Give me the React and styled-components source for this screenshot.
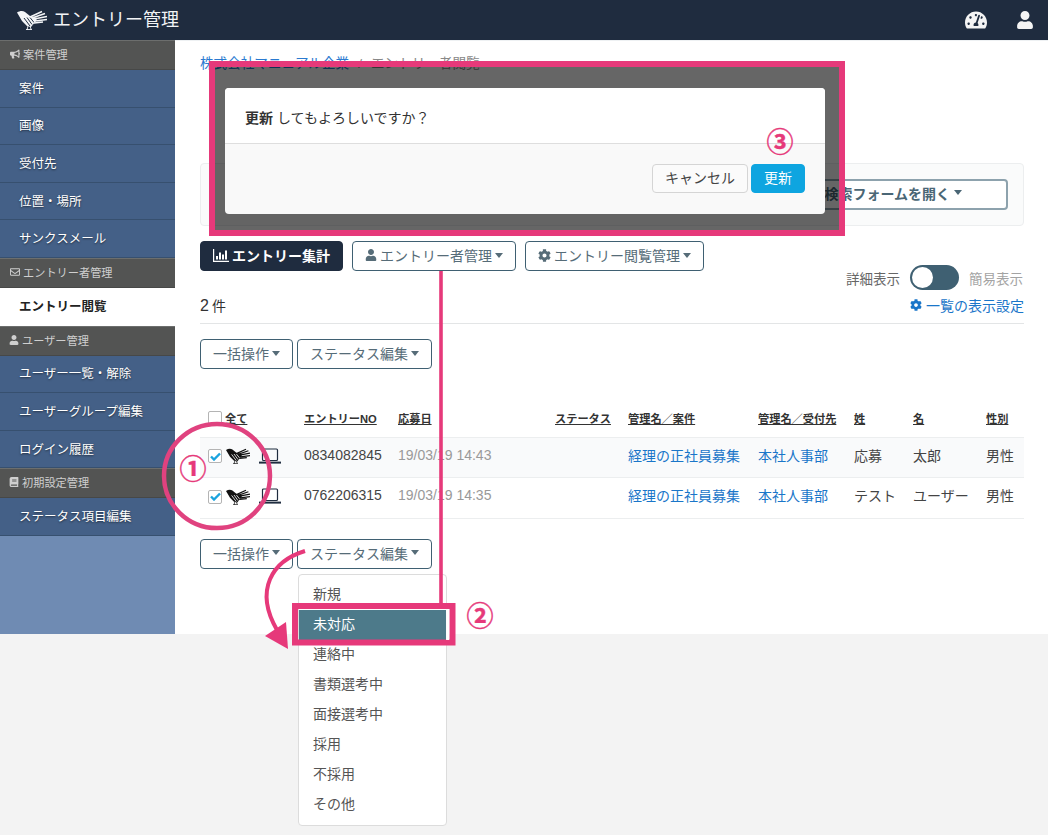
import React from "react";
import styled, { createGlobalStyle } from "styled-components";
import { FaBullhorn, FaRegEnvelope, FaUser, FaBook, FaCog, FaTachometerAlt } from "react-icons/fa";

const PINK = "#e6397a";
const TEAL = "#3f6072";
const NAVY = "#1f2c3f";

const Global = createGlobalStyle`
  html, body { margin: 0; padding: 0; background: #f3f3f3; }
  body { font-family: "Liberation Sans", "Noto Sans CJK JP", sans-serif; font-size: 14px; color: #333; }
  * { box-sizing: border-box; }
`;

const Page = styled.div`
  position: relative;
  width: 1048px;
  height: 835px;
  overflow: hidden;
`;

const TopBar = styled.header`
  height: 40px;
  background: ${NAVY};
  display: flex;
  align-items: center;
  padding: 0 14px 0 17px;
  color: #fff;
`;
const Brand = styled.div`
  display: flex;
  align-items: center;
  gap: 6px;
  font-size: 18px;
  color: #f2f4f6;
  flex: 1;
`;
const BrandName = styled.span`
  padding-bottom: 4px;
`;
const TopIcons = styled.div`
  display: flex;
  align-items: center;
  gap: 29px;
  font-size: 20px;
  color: #f4f4f4;
  svg { display: block; }
`;

const Body = styled.div`
  display: flex;
  height: 594px;
`;
const Sidebar = styled.nav`
  width: 175px;
  flex: none;
  background: #6f8bb3;
`;
const SideSection = styled.div`
  height: 30px;
  background: #535453;
  border-top: 1px solid #6c6e6d;
  border-bottom: 1px solid #474847;
  color: #cfcfcf;
  font-size: 11.2px;
  display: flex;
  align-items: center;
  gap: 3px;
  padding: 0 0 2px ${(p) => p.$pad || 10}px;
  svg { font-size: 10px; flex: none; }
`;
const SideItem = styled.div`
  height: 37.6px;
  display: flex;
  align-items: center;
  padding: 0 0 2px 19px;
  font-size: 12.5px;
  background: ${(p) => (p.$active ? "#fff" : "#446087")};
  color: ${(p) => (p.$active ? "#222" : "#fff")};
  font-weight: ${(p) => (p.$active ? 700 : 400)};
  text-shadow: ${(p) => (p.$active ? "none" : "0 1px 2px rgba(0,0,0,.55)")};
  border-bottom: 1px solid ${(p) => (p.$active ? "#fff" : "#37506f")};
`;

const Main = styled.main`
  flex: 1;
  background: #fff;
  padding: 14px 24px 0 25px;
  border-top: 1px solid #eef1f3;
`;
const Breadcrumb = styled.div`
  font-size: 13.6px;
  line-height: 18px;
  color: #888;
  a { color: #2a7ad0; }
`;
const CrumbSep = styled.span`
  margin: 0 9px;
`;
const SearchPanel = styled.section`
  margin-top: 90px;
  height: 63px;
  border: 1px solid #eceeef;
  border-radius: 4px;
  background: #fafbfb;
  display: flex;
  justify-content: flex-end;
  align-items: center;
  padding: 0 15px;
`;
const SearchButton = styled.div`
  height: 31px;
  border: 2px solid #8da2ad;
  border-radius: 4px;
  padding: 0 44px 4px;
  display: flex;
  align-items: center;
  gap: 4px;
  color: #4a6675;
  font-weight: 700;
  font-size: 14px;
  background: #fff;
`;
const Caret = styled.i`
  display: inline-block;
  width: 0;
  height: 0;
  border-left: 4px solid transparent;
  border-right: 4px solid transparent;
  border-top: 5px solid currentColor;
`;
const ButtonRow = styled.div`
  display: flex;
  gap: ${(p) => p.$gap || 4}px;
  margin-top: ${(p) => p.$top || 0}px;
`;
const Button = styled.div`
  position: relative;
  height: 30px;
  padding: 0 ${(p) => p.$pad || 12}px 2px;
  border: 1px solid ${(p) => (p.$solid ? NAVY : TEAL)};
  border-radius: 4px;
  background: ${(p) => (p.$solid ? NAVY : "#fff")};
  color: ${(p) => (p.$solid ? "#fff" : "#566c78")};
  font-weight: ${(p) => (p.$solid ? 700 : 400)};
  font-size: 14px;
  display: flex;
  align-items: center;
  gap: 3px;
  white-space: nowrap;
  svg { flex: none; }
`;
const ResultHead = styled.div`
  display: flex;
  justify-content: space-between;
  align-items: flex-end;
  margin-top: -7px;
  height: 60px;
  padding-bottom: 8px;
  border-bottom: 1px solid #e3e5e6;
`;
const Count = styled.div`
  font-size: 14px;
  color: #333;
  b { font-size: 16px; font-weight: 400; margin-right: 3px; }
`;
const ViewTools = styled.div`
  display: flex;
  flex-direction: column;
  align-items: flex-end;
  gap: 5px;
`;
const ToggleRow = styled.div`
  display: flex;
  align-items: center;
  gap: 10px;
  font-size: 13.5px;
  padding-right: 1px;
`;
const ToggleLabel = styled.span`
  color: ${(p) => (p.$on ? "#666" : "#a3a3a3")};
`;
const Toggle = styled.span`
  display: block;
  width: 49px;
  height: 25px;
  border-radius: 13px;
  background: ${TEAL};
  position: relative;
  &::before {
    content: "";
    position: absolute;
    left: 2px;
    top: 2px;
    width: 21px;
    height: 21px;
    border-radius: 50%;
    background: #fff;
  }
`;
const SettingLink = styled.div`
  display: flex;
  align-items: center;
  gap: 4px;
  font-size: 14px;
  color: #1a76c9;
  svg { font-size: 12px; }
`;
const Table = styled.table`
  width: 824px;
  table-layout: fixed;
  border-collapse: collapse;
  margin-top: 30px;
`;
const Th = styled.th`
  height: 38px;
  padding: 0 0 0 8px;
  font-size: 11.2px;
  font-weight: 700;
  text-align: left;
  color: #333;
  text-decoration: underline;
  white-space: nowrap;
`;
const HeadCheck = styled.div`
  display: flex;
  align-items: center;
  gap: 3px;
`;
const Row = styled.tr`
  background: ${(p) => (p.$odd ? "#f9fafb" : "#fff")};
  border-top: 1px solid #eceeef;
  border-bottom: 1px solid #eceeef;
`;
const Td = styled.td`
  height: 40.5px;
  padding: 0 0 ${(p) => (p.$icons ? 2 : 5)}px 8px;
  font-size: 14px;
  white-space: nowrap;
  color: ${(p) => (p.$muted ? "#999" : p.$link ? "#1a76c9" : "#444")};
`;
const RowIcons = styled.div`
  display: flex;
  align-items: center;
  gap: 4px;
`;
const LaptopSlot = styled.span`
  margin-left: 5px;
`;
const CheckBox = styled.span`
  display: inline-flex;
  align-items: center;
  justify-content: center;
  width: 14px;
  height: 14px;
  flex: none;
  background: #fff;
  border: 1px solid #b4b4b4;
  border-radius: 2px;
  color: #1aa3de;
`;
const Menu = styled.div`
  position: absolute;
  left: 0;
  top: 34px;
  width: 149px;
  padding: 5px 0;
  background: #fff;
  border: 1px solid #dcdcdc;
  border-radius: 4px;
  z-index: 2;
`;
const MenuItem = styled.div`
  height: 30px;
  padding: 0 0 3px 14px;
  display: flex;
  align-items: center;
  font-size: 14px;
  color: ${(p) => (p.$active ? "#fff" : "#555")};
  background: ${(p) => (p.$active ? "#4d7a8a" : "transparent")};
`;

const Frame = styled.div`
  position: absolute;
  left: 209px;
  top: 61px;
  width: 636px;
  height: 175px;
  border: 6px solid ${PINK};
  background: rgba(0, 0, 0, 0.6);
  padding: 21px 0 0 10px;
  z-index: 3;
`;
const Modal = styled.div`
  width: 600px;
  height: 126px;
  border-radius: 4px;
  background: #f9f9f9;
  overflow: hidden;
`;
const ModalBody = styled.div`
  height: 56px;
  background: #fff;
  border-bottom: 1px solid #dedede;
  display: flex;
  align-items: center;
  padding: 3px 0 0 20px;
  font-size: 14px;
  color: #333;
  b { margin-right: 4px; }
`;
const ModalFoot = styled.div`
  display: flex;
  justify-content: flex-end;
  gap: 3px;
  padding: 20px 20px 0 0;
`;
const ModalButton = styled.div`
  height: 29px;
  width: ${(p) => p.$w}px;
  display: flex;
  align-items: center;
  justify-content: center;
  padding-bottom: 3px;
  border-radius: 4px;
  font-size: 14px;
  border: 1px solid ${(p) => (p.$primary ? "#0ea5e0" : "#d5d5d5")};
  background: ${(p) => (p.$primary ? "#0ea5e0" : "#fbfbfb")};
  color: ${(p) => (p.$primary ? "#fff" : "#444")};
`;
const Marks = styled.svg`
  position: absolute;
  left: 0;
  top: 0;
  z-index: 4;
  pointer-events: none;
`;
const Num = styled.span`
  position: absolute;
  left: ${(p) => p.$x}px;
  top: ${(p) => p.$y}px;
  transform: translate(-50%, -50%);
  font-size: 27px;
  line-height: 1;
  font-weight: 700;
  -webkit-text-stroke: 0.4px ${PINK};
  color: ${PINK};
  z-index: 5;
`;

const Bird = ({ w, body, stripe }) => (
  <svg width={w} viewBox="0 0 30 20" style={{ display: "block" }}>
    <path d="M0 2.5 C3 .5 6 .5 8 2 L13 6 L20 8 L19 11 L14 17 L10 16 L5 11 Z" fill={body} />
    <path d="M7 8 L13 16 M10 7.5 L15 14.5 M13 7.5 L17 12.5" stroke={stripe} strokeWidth="1" />
    <path d="M13 7 L25 1.5 M15 8 L28 3.5 M17 9 L30 6.5 M18 11 L30 9.5 M17 13 L26 12" stroke={body} strokeWidth="1.5" />
    <path d="M11 16 L10 20 M13 16 L14 19 M9 19.5 L15 19.5" stroke={body} strokeWidth=".9" />
  </svg>
);

const Laptop = () => (
  <svg width="22" height="17" viewBox="0 0 22 17" style={{ display: "block" }}>
    <rect x="3.5" y="1" width="15" height="11.5" rx="1" fill="none" stroke="#1f2c3f" strokeWidth="1.2" />
    <path d="M0 14.6 H22" stroke="#1f2c3f" strokeWidth="2" />
  </svg>
);

const Check = () => (
  <svg width="11" height="9" viewBox="0 0 11 9">
    <path d="M1 4.5 L4 7.5 L10 1.5" fill="none" stroke="currentColor" strokeWidth="2.4" />
  </svg>
);

const Bars = () => (
  <svg width="16" height="13" viewBox="0 0 16 13">
    <path d="M.6 0 V12.4 H16" fill="none" stroke="#fff" strokeWidth="1.2" />
    <path d="M4 10.5 V7 M7 10.5 V3.5 M10 10.5 V5.5 M13 10.5 V1.5" stroke="#fff" strokeWidth="2" />
  </svg>
);

const rows = [
  { no: "0834082845", date: "19/03/19 14:43", sei: "応募", mei: "太郎" },
  { no: "0762206315", date: "19/03/19 14:35", sei: "テスト", mei: "ユーザー" },
];
const statuses = ["新規", "未対応", "連絡中", "書類選考中", "面接選考中", "採用", "不採用", "その他"];
const widths = [96, 94, 157, 73, 130, 96, 59, 73, 46];

export default function App() {
  return (
    <Page>
      <Global />
      <TopBar>
        <Brand>
          <Bird w={30} body="#f4f6f8" stripe={NAVY} />
          <BrandName>エントリー管理</BrandName>
        </Brand>
        <TopIcons>
          <FaTachometerAlt size={22} />
          <FaUser size={18} />
        </TopIcons>
      </TopBar>
      <Body>
        <Sidebar>
          <SideSection><FaBullhorn />案件管理</SideSection>
          <SideItem>案件</SideItem>
          <SideItem>画像</SideItem>
          <SideItem>受付先</SideItem>
          <SideItem>位置・場所</SideItem>
          <SideItem>サンクスメール</SideItem>
          <SideSection><FaRegEnvelope />エントリー者管理</SideSection>
          <SideItem $active>エントリー閲覧</SideItem>
          <SideSection $pad={9}><FaUser />ユーザー管理</SideSection>
          <SideItem>ユーザー一覧・解除</SideItem>
          <SideItem>ユーザーグループ編集</SideItem>
          <SideItem>ログイン履歴</SideItem>
          <SideSection $pad={9}><FaBook />初期設定管理</SideSection>
          <SideItem>ステータス項目編集</SideItem>
        </Sidebar>
        <Main>
          <Breadcrumb><a>株式会社マニュアル企業</a><CrumbSep>/</CrumbSep>エントリー者閲覧</Breadcrumb>
          <SearchPanel>
            <SearchButton>検索フォームを開く<Caret /></SearchButton>
          </SearchPanel>
          <ButtonRow $gap={9} $top={15}>
            <Button $solid><Bars />エントリー集計</Button>
            <Button><FaUser size={12} />エントリー者管理<Caret /></Button>
            <Button><FaCog size={13} />エントリー閲覧管理<Caret /></Button>
          </ButtonRow>
          <ResultHead>
            <Count><b>2</b>件</Count>
            <ViewTools>
              <ToggleRow>
                <ToggleLabel $on>詳細表示</ToggleLabel>
                <Toggle />
                <ToggleLabel>簡易表示</ToggleLabel>
              </ToggleRow>
              <SettingLink><FaCog />一覧の表示設定</SettingLink>
            </ViewTools>
          </ResultHead>
          <ButtonRow $top={15}>
            <Button>一括操作<Caret /></Button>
            <Button>ステータス編集<Caret /></Button>
          </ButtonRow>
          <Table>
            <colgroup>
              {widths.map((w, i) => <col key={i} style={{ width: w }} />)}
            </colgroup>
            <thead>
              <tr>
                <Th><HeadCheck><CheckBox />全て</HeadCheck></Th>
                <Th>エントリーNO</Th>
                <Th>応募日</Th>
                <Th>ステータス</Th>
                <Th>管理名／案件</Th>
                <Th>管理名／受付先</Th>
                <Th>姓</Th>
                <Th>名</Th>
                <Th>性別</Th>
              </tr>
            </thead>
            <tbody>
              {rows.map((r, i) => (
                <Row key={r.no} $odd={i === 0}>
                  <Td $icons>
                    <RowIcons>
                      <CheckBox><Check /></CheckBox>
                      <Bird w={24} body="#111" stripe="#fff" />
                      <LaptopSlot><Laptop /></LaptopSlot>
                    </RowIcons>
                  </Td>
                  <Td>{r.no}</Td>
                  <Td $muted>{r.date}</Td>
                  <Td />
                  <Td $link>経理の正社員募集</Td>
                  <Td $link>本社人事部</Td>
                  <Td>{r.sei}</Td>
                  <Td>{r.mei}</Td>
                  <Td>男性</Td>
                </Row>
              ))}
            </tbody>
          </Table>
          <ButtonRow $top={20}>
            <Button>一括操作<Caret /></Button>
            <Button>
              ステータス編集<Caret />
              <Menu>
                {statuses.map((s) => (
                  <MenuItem key={s} $active={s === "未対応"}>{s}</MenuItem>
                ))}
              </Menu>
            </Button>
          </ButtonRow>
        </Main>
      </Body>

      <Frame>
        <Modal>
          <ModalBody><b>更新</b>してもよろしいですか？</ModalBody>
          <ModalFoot>
            <ModalButton $w={96}>キャンセル</ModalButton>
            <ModalButton $w={54} $primary>更新</ModalButton>
          </ModalFoot>
        </Modal>
      </Frame>

      <Marks width="1048" height="835" viewBox="0 0 1048 835">
        <path d="M441 271 V604" stroke={PINK} strokeWidth="3.6" />
        <ellipse cx="217" cy="476" rx="53" ry="52" fill="none" stroke="#e0427f" strokeWidth="4.5" />
        <path d="M305 551 C272 561 254 590 277 630" fill="none" stroke={PINK} strokeWidth="4" />
        <path d="M265 636 L286 622 L288 649 Z" fill={PINK} />
        <rect x="295" y="606" width="157.5" height="36.5" fill="none" stroke={PINK} strokeWidth="6" />
        <path d="M447.6 609 V640" stroke="#fff" strokeWidth="3" />
      </Marks>
      <Num $x={193} $y={470}>①</Num>
      <Num $x={480} $y={617}>②</Num>
      <Num $x={780} $y={143}>③</Num>
    </Page>
  );
}
